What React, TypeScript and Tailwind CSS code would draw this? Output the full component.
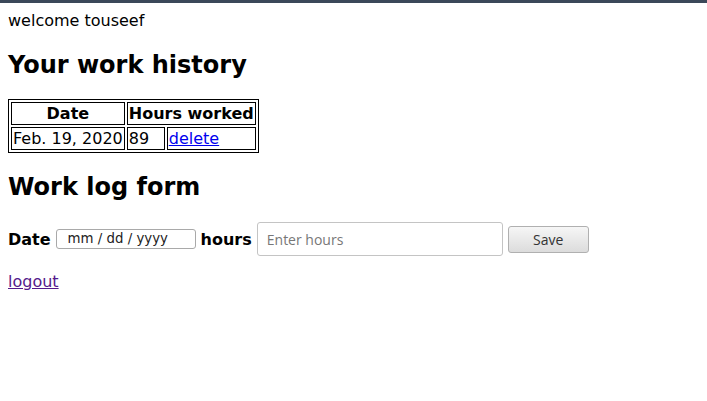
export default function App() {
  return (
    <div className="min-h-[401px] bg-white text-black font-['DejaVu_Sans',sans-serif] text-[16px] leading-[19px]">
      <div className="h-[3px] bg-[#3b4859]" />
      <div className="m-[8px]">
        <div>welcome touseef</div>

        <h2 className="mt-[21px] mb-[20px] text-[24px] leading-[28px] font-bold">
          Your work history
        </h2>

        <table className="border border-black border-separate border-spacing-[2px]">
          <thead>
            <tr>
              <th className="border border-black p-[1px] font-bold text-center">Date</th>
              <th colSpan={2} className="border border-black p-[1px] font-bold text-center">
                Hours worked
              </th>
            </tr>
          </thead>
          <tbody>
            <tr>
              <td className="border border-black p-[1px]">Feb. 19, 2020</td>
              <td className="border border-black p-[1px] w-[38px]">89</td>
              <td className="border border-black p-[1px]">
                <a href="#" className="text-[#0000ee] underline">
                  delete
                </a>
              </td>
            </tr>
          </tbody>
        </table>

        <h2 className="mt-[20px] mb-[20px] text-[24px] leading-[28px] font-bold">
          Work log form
        </h2>

        <form className="flex items-center h-[36px]" onSubmit={(e) => e.preventDefault()}>
          <label className="font-bold">Date</label>
          <div className="ml-[5px] w-[140px] h-[20px] border border-[#a9a9a9] rounded-[3px] flex items-center pl-[11px] text-[13.33px] leading-[16px] text-[#222]">
            mm / dd / yyyy
          </div>
          <label className="ml-[5px] font-bold">hours</label>
          <input
            type="text"
            placeholder="Enter hours"
            className="ml-[5px] w-[246px] h-[34px] border border-[#c4c4c4] rounded-[3px] px-[9px] text-[14px] font-['Open_Sans',sans-serif] placeholder:text-[#777] outline-none"
          />
          <button
            type="submit"
            className="ml-[5px] w-[81px] h-[27px] border border-[#b0b0b0] rounded-[3px] bg-gradient-to-b from-[#f6f6f6] to-[#dcdcdc] text-[14px] text-[#333] font-['Open_Sans',sans-serif]"
          >
            Save
          </button>
        </form>

        <div className="mt-[15px]">
          <a href="#" className="text-[#551a8b] underline">
            logout
          </a>
        </div>
      </div>
    </div>
  );
}
